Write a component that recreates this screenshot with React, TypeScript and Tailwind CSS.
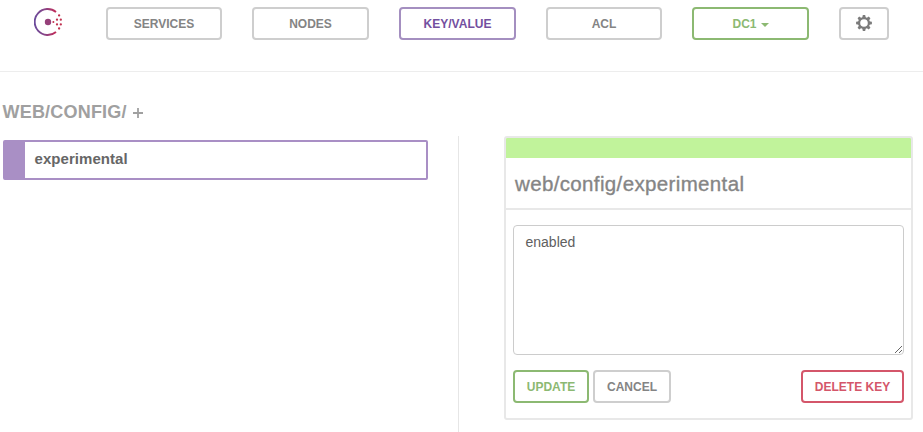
import type { ReactNode } from "react";

const button =
  "flex h-[33px] shrink-0 items-center justify-center rounded-[4px] border-2 bg-white text-[12px] leading-none font-bold";

function ConsulLogo() {
  return (
    <svg viewBox="0 0 28 28" className="ml-[34px] mt-px h-7 w-7 shrink-0">
      <defs>
        <linearGradient id="ring" x1="0" y1="0" x2="28" y2="0" gradientUnits="userSpaceOnUse">
          <stop offset="0" stopColor="#694a9c" />
          <stop offset="0.4" stopColor="#8a4586" />
          <stop offset="0.8" stopColor="#c62a55" />
        </linearGradient>
      </defs>
      <path d="M22 4 A13 13 0 1 0 22 24" fill="none" stroke="url(#ring)" strokeWidth="1.9" />
      <circle cx="14" cy="14" r="3.2" fill="#96407a" />
      <g fill="#c0304f">
        <circle cx="19.4" cy="14" r="1" />
        <circle cx="23" cy="11.7" r="1.15" />
        <circle cx="23" cy="16.4" r="1.15" />
        <circle cx="26.8" cy="11.7" r="1.15" />
        <circle cx="26.8" cy="16.4" r="1.15" />
        <circle cx="25.1" cy="7.4" r="1.15" />
        <circle cx="25.1" cy="20.5" r="1.15" />
      </g>
    </svg>
  );
}

function Gear() {
  return (
    <svg viewBox="-8 -8 16 16" className="-mt-px h-4 w-4" fill="#7b7b7b">
      <circle r="4.9" fill="none" stroke="#7b7b7b" strokeWidth="2.2" />
      {[0, 45, 90, 135, 180, 225, 270, 315].map((a) => (
        <path key={a} d="M-1.8 -5 L-1.2 -7.9 H1.2 L1.8 -5 Z" transform={`rotate(${a})`} />
      ))}
    </svg>
  );
}

function NavButton({ className, children }: { className: string; children: ReactNode }) {
  return <button className={`${button} ${className}`}>{children}</button>;
}

export default function App() {
  return (
    <div className="flex h-[432px] w-[923px] flex-col overflow-hidden bg-white font-['Liberation_Sans',Arial,sans-serif]">
      <header className="flex h-[72px] shrink-0 items-start border-b border-[#ededed] pt-[7px]">
        <ConsulLogo />
        <nav className="ml-11 flex">
          <NavButton className="w-[116px] border-[#cecece] text-[#848484]">SERVICES</NavButton>
          <NavButton className="ml-[30px] w-[117px] border-[#cecece] text-[#848484]">NODES</NavButton>
          <NavButton className="ml-[30px] w-[117px] border-[#a48fc0] text-[#7350a0]">KEY/VALUE</NavButton>
          <NavButton className="ml-[30px] w-[116px] border-[#cecece] text-[#848484]">ACL</NavButton>
          <NavButton className="ml-[30px] w-[117px] border-[#8cb972] text-[#8cb972]">
            DC1
            <svg viewBox="0 0 8 4" className="ml-1 mt-0.5 h-1 w-2" fill="#8cb972">
              <path d="M0 0 H8 L4 4 Z" />
            </svg>
          </NavButton>
          <NavButton className="ml-[30px] w-[50px] border-[#cecece]">
            <Gear />
          </NavButton>
        </nav>
      </header>

      <h4 className="flex h-16 shrink-0 items-start pt-[30px] pl-[2.5px] text-[18px] leading-[20px] font-bold text-[#a0a0a0]">
        <span className="tracking-[0.2px]">WEB/CONFIG/</span>
        <svg viewBox="0 0 10 10" className="mt-[6px] ml-[6px] h-[10px] w-[10px]">
          <path d="M5 0 V10 M0 5 H10" stroke="#a0a0a0" strokeWidth="1.8" />
        </svg>
      </h4>

      <main className="flex min-h-0 flex-1">
        <section className="w-[458px] shrink-0 pt-1 pl-[3px]">
          <div className="flex h-10 w-[425px] rounded-[2px] border-2 border-[#a98fc5] bg-white">
            <div className="w-5 bg-[#a98fc5]" />
            <span className="pt-[8px] pl-[9.5px] text-[15px] leading-[18px] font-bold tracking-[0.05px] text-[#666]">
              experimental
            </span>
          </div>
        </section>
        <section className="w-[465px] border-l border-[#e6e6e6] pl-[45px]">
          <div className="h-[284px] w-[409px] overflow-hidden rounded-[3px] border-2 border-[#e8e8e8]">
            <div className="h-5 bg-[#c1f39b]" />
            <h4 className="h-[52px] border-b-2 border-[#e8e8e8] pt-[14px] pl-[9px] text-[20.5px] leading-[24px] tracking-[0.36px] text-[#858585] [-webkit-text-stroke:0.35px_#858585]">
              web/config/experimental
            </h4>
            <div className="px-[7px] pt-[15px]">
              <textarea
                readOnly
                value="enabled"
                className="block h-[130px] w-[391px] resize rounded-[4px] border border-[#cccccc] bg-white px-[11.5px] py-[6px] text-[14px] leading-[20px] text-[#606060] outline-none"
              />
              <div className="mt-[15px] flex gap-1">
                <button className={`${button} w-[76px] border-[#8cb972] text-[#8cb972]`}>UPDATE</button>
                <button className={`${button} w-[78px] border-[#cecece] text-[#848484]`}>CANCEL</button>
                <button className={`${button} ml-auto w-[103px] border-[#d4566a] text-[#d4566a]`}>DELETE KEY</button>
              </div>
            </div>
          </div>
        </section>
      </main>
    </div>
  );
}
